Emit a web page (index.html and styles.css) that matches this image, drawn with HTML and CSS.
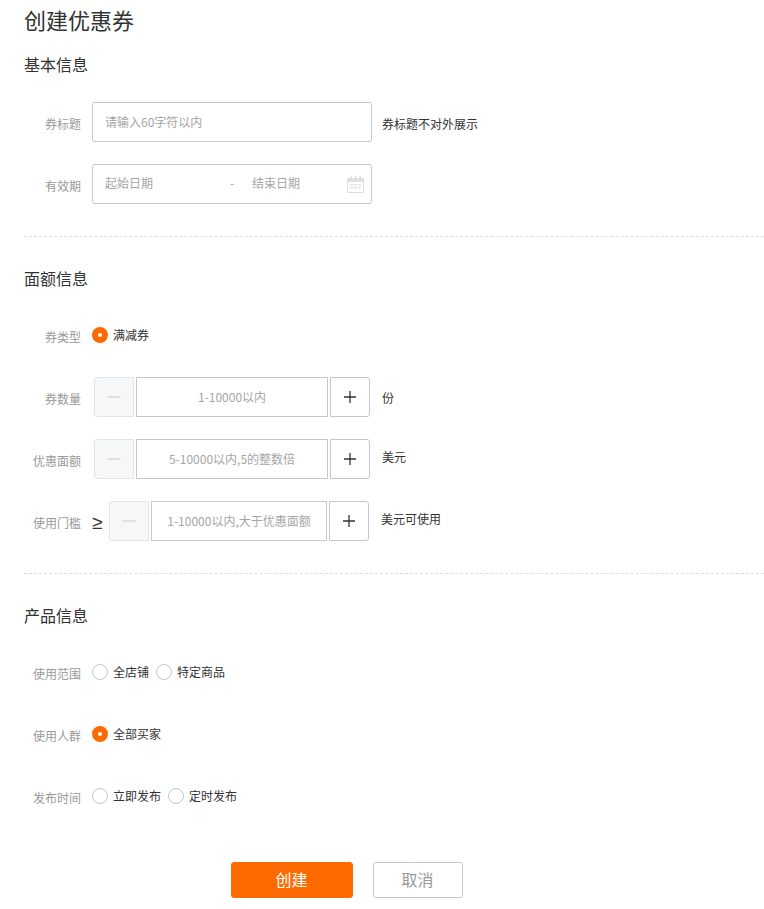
FILE: index.html
```html
<!DOCTYPE html>
<html lang="zh-CN">
<head>
<meta charset="utf-8">
<title>创建优惠券</title>
<link rel="stylesheet" href="styles.css">
</head>
<body>
<main class="page">
  <h1 class="title">创建优惠券</h1>

  <section class="section">
    <h2 class="heading">基本信息</h2>
    <div class="rows">
      <div class="row">
        <span class="label">券标题</span>
        <div class="field"><span class="hint">请输入60字符以内</span></div>
        <span class="tail">券标题不对外展示</span>
      </div>
      <div class="row">
        <span class="label">有效期</span>
        <div class="field date">
          <span class="hint date-start">起始日期</span>
          <span class="hint date-dash">-</span>
          <span class="hint date-end">结束日期</span>
          <svg class="calendar" width="17" height="17" viewBox="0 0 17 17" fill="none" stroke="#e0e0e0">
            <rect x="0.5" y="2.5" width="16" height="14" stroke-width="1"/>
            <path d="M0 3h17v3H0z" fill="#e0e0e0" stroke="none"/>
            <path d="M4 0v4M8.500 0v4M13 0v4" stroke-width="1.500"/>
            <path d="M3 8h3v1.500H3zM7 8h3v1.500H7zM11 8h3v1.500h-3zM3 11h3v1.500H3zM7 11h3v1.500H7zM11 11h3v1.500h-3z" fill="#e4e4e4" stroke="none"/>
          </svg>
        </div>
      </div>
    </div>
  </section>

  <section class="section">
    <h2 class="heading">面额信息</h2>
    <div class="rows">
      <div class="row">
        <span class="label">券类型</span>
        <div class="radios"><span class="radio"><i class="dot on"></i>满减券</span></div>
      </div>
      <div class="row">
        <span class="label">券数量</span>
        <div class="stepper">
          <span class="step off"><svg width="14" height="14" viewBox="0 0 14 14"><path d="M0.500 7h13" stroke="#d9d9d9" stroke-width="1.500"/></svg></span>
          <span class="step-input wide">1-10000以内</span>
          <span class="step"><svg width="14" height="14" viewBox="0 0 14 14"><path d="M1 7h12M7 1v12" stroke="#333" stroke-width="1.300"/></svg></span>
        </div>
        <span class="tail tail-low">份</span>
      </div>
      <div class="row">
        <span class="label">优惠面额</span>
        <div class="stepper">
          <span class="step off"><svg width="14" height="14" viewBox="0 0 14 14"><path d="M0.500 7h13" stroke="#d9d9d9" stroke-width="1.500"/></svg></span>
          <span class="step-input wide">5-10000以内,5的整数倍</span>
          <span class="step"><svg width="14" height="14" viewBox="0 0 14 14"><path d="M1 7h12M7 1v12" stroke="#333" stroke-width="1.300"/></svg></span>
        </div>
        <span class="tail tail-mid">美元</span>
      </div>
      <div class="row">
        <span class="label">使用门槛</span>
        <span class="gte">≥</span>
        <div class="stepper narrow">
          <span class="step off"><svg width="14" height="14" viewBox="0 0 14 14"><path d="M0.500 7h13" stroke="#d9d9d9" stroke-width="1.500"/></svg></span>
          <span class="step-input">1-10000以内,大于优惠面额</span>
          <span class="step"><svg width="14" height="14" viewBox="0 0 14 14"><path d="M1 7h12M7 1v12" stroke="#333" stroke-width="1.300"/></svg></span>
        </div>
        <span class="tail tail-mid">美元可使用</span>
      </div>
    </div>
  </section>

  <section class="section last">
    <h2 class="heading">产品信息</h2>
    <div class="rows">
      <div class="row">
        <span class="label">使用范围</span>
        <div class="radios">
          <span class="radio"><i class="dot"></i>全店铺</span>
          <span class="radio"><i class="dot"></i>特定商品</span>
        </div>
      </div>
      <div class="row">
        <span class="label">使用人群</span>
        <div class="radios"><span class="radio"><i class="dot on"></i>全部买家</span></div>
      </div>
      <div class="row">
        <span class="label">发布时间</span>
        <div class="radios">
          <span class="radio"><i class="dot"></i>立即发布</span>
          <span class="radio"><i class="dot"></i>定时发布</span>
        </div>
      </div>
    </div>
  </section>

  <div class="actions">
    <button class="btn primary" type="button">创建</button>
    <button class="btn" type="button">取消</button>
  </div>
</main>
</body>
</html>
```
FILE: styles.css
```css
* { box-sizing: border-box; }
html, body { margin: 0; padding: 0; background: #fff; }
body {
  font-family: "Noto Sans CJK SC", "Liberation Sans", sans-serif;
  font-size: 12px;
  color: #333;
}
.page { padding-left: 24px; height: 909px; overflow: hidden; }
.title {
  margin: 0;
  height: 44px;
  line-height: 38px;
  font-size: 22px;
  font-weight: 400;
  color: #333;
}
.section {
  padding-bottom: 32px;
  margin-bottom: 29px;
  border-bottom: 1px dashed #dcdee3;
}
.section:first-of-type { margin-top: 8px; }
.section.last { padding-bottom: 0; margin-bottom: 46px; border-bottom: 0; }
.heading {
  margin: 0 0 25px;
  height: 24px;
  line-height: 24px;
  font-size: 16px;
  font-weight: 400;
  color: #333;
}
.section:first-of-type .heading { margin-bottom: 26px; }
.rows { display: flex; flex-direction: column; gap: 22px; }
.row { display: flex; align-items: center; height: 40px; }
.label {
  width: 57px;
  margin-right: 11px;
  padding-top: 2px;
  text-align: right;
  color: #999;
  white-space: nowrap;
}
.field {
  display: flex;
  align-items: center;
  width: 280px;
  height: 40px;
  padding: 0 12px 2px;
  background: #fff;
  border: 1px solid #c4c6cf;
  border-radius: 3px;
}
.hint { color: #a5a5a5; }
.tail { margin-left: 10px; padding-top: 3px; color: #333; }
.tail-low { padding-top: 1px; margin-left: 12px; }
.tail-mid { padding-top: 0; margin-left: 12px; padding-bottom: 5px; }
.date { padding: 0 7px 3px 12px; }
.date-start { width: 125px; }
.date-dash { width: 22px; }
.date-end { flex: 1; }
.calendar { margin-top: 3px; }
.radios { display: flex; gap: 7px; }
.radio { display: flex; align-items: center; gap: 5px; color: #333; line-height: 16px; }
.dot {
  display: block;
  width: 16px;
  height: 16px;
  border: 1px solid #c4c6cf;
  border-radius: 50%;
  background: #fff;
}
.dot.on {
  border: 6px solid #ff6a00;
  background: #fff;
}
.stepper { display: flex; gap: 2px; margin-left: 2px; }
.step {
  display: flex;
  align-items: center;
  justify-content: center;
  width: 40px;
  height: 40px;
  border: 1px solid #c4c6cf;
  border-radius: 0 3px 3px 0;
  background: #fff;
}
.step.off {
  background: #f6f7f9;
  border-color: #e3e4e9;
  border-radius: 3px 0 0 3px;
}
.step-input {
  display: flex;
  align-items: center;
  justify-content: center;
  width: 176px;
  height: 40px;
  padding-bottom: 2px;
  border: 1px solid #c4c6cf;
  color: #a5a5a5;
  white-space: nowrap;
}
.step-input.wide { width: 192px; }
.gte {
  width: 15px;
  padding-top: 3px;
  font-size: 19px;
  line-height: 1;
  color: #333;
  font-family: "Liberation Sans", sans-serif;
}
.actions { display: flex; gap: 20px; margin-left: 207px; }
.btn {
  width: 90px;
  height: 36px;
  padding: 0 1px 2px 0;
  font: inherit;
  font-size: 16px;
  color: #999;
  background: #fff;
  border: 1px solid #c4c6cf;
  border-radius: 3px;
}
.btn.primary {
  width: 122px;
  color: #fff;
  background: #ff6a00;
  border-color: #ff6a00;
}
```
